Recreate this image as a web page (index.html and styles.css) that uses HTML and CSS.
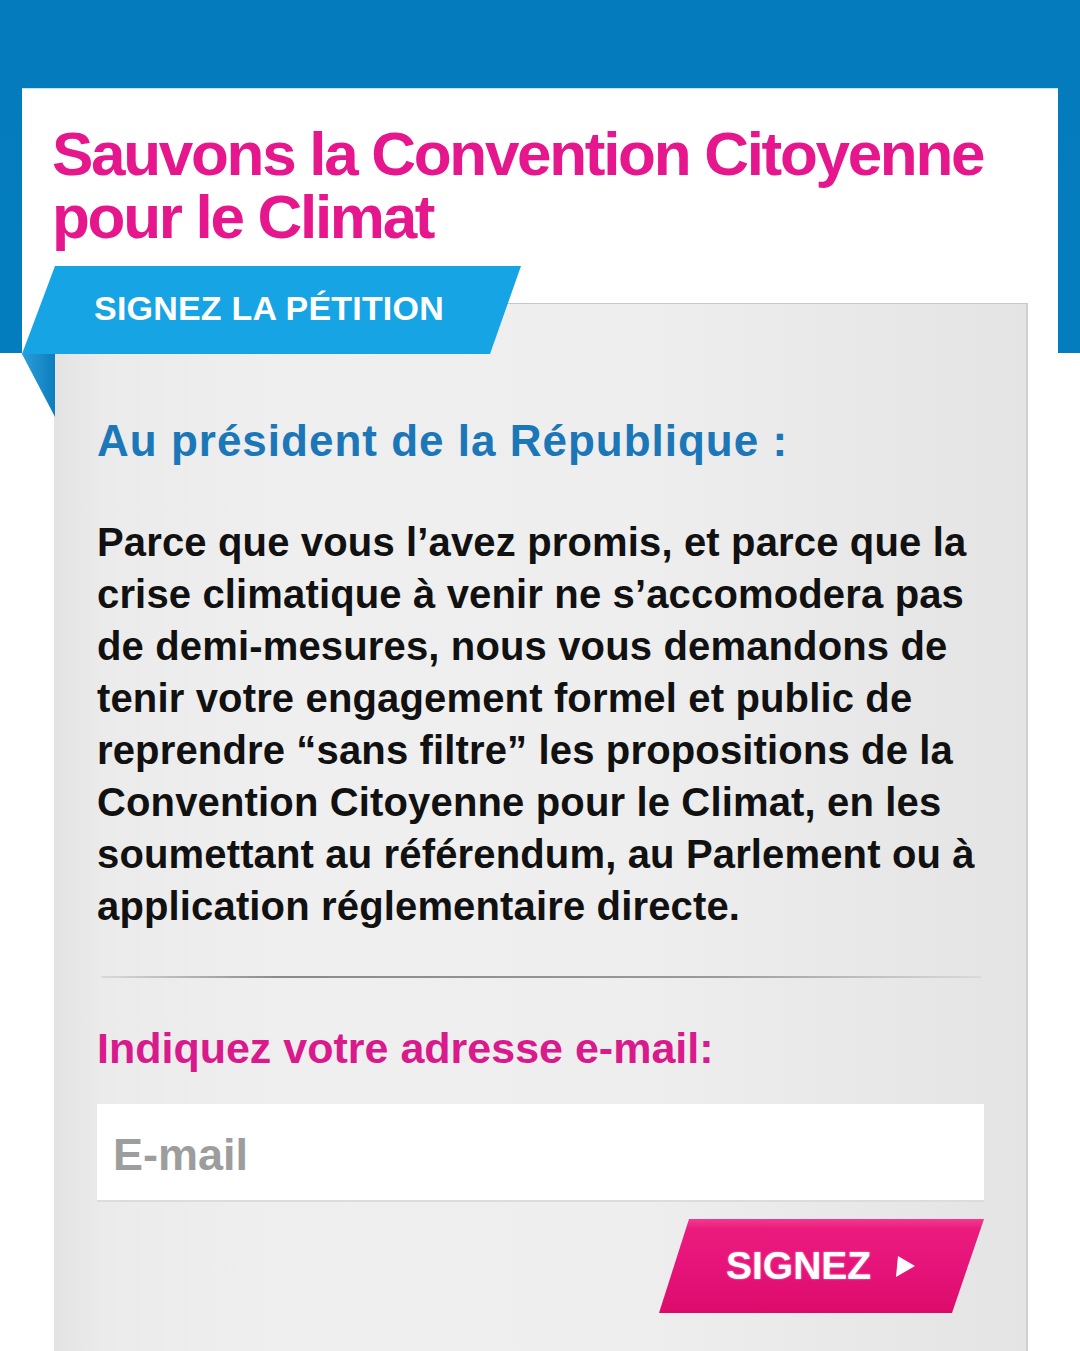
FILE: index.html
```html
<!DOCTYPE html>
<html lang="fr">
<head>
<meta charset="utf-8">
<title>Sauvons la Convention Citoyenne pour le Climat</title>
<link rel="stylesheet" href="styles.css">
</head>
<body>
<div class="page">
  <div class="card">
    <h1 class="title">Sauvons la Convention Citoyenne<br>pour le Climat</h1>
    <section class="panel">
      <div class="ribbon"><span>SIGNEZ LA PÉTITION</span></div>
      <div class="ribbon-fold"></div>
      <h2 class="addressee">Au président de la République :</h2>
      <p class="body-text">Parce que vous l’avez promis, et parce que la<br>crise climatique à venir ne s’accomodera pas<br>de demi-mesures, nous vous demandons de<br>tenir votre engagement formel et public de<br>reprendre “sans filtre” les propositions de la<br>Convention Citoyenne pour le Climat, en les<br>soumettant au référendum, au Parlement ou à<br>application réglementaire directe.</p>
      <hr class="divider">
      <label class="email-label" for="email">Indiquez votre adresse e-mail:</label>
      <input class="email-input" id="email" type="email" placeholder="E-mail">
      <div class="actions">
        <button class="sign-btn" type="button">
          <span class="sign-text">SIGNEZ</span>
          <svg class="sign-arrow" width="21" height="23" viewBox="0 0 21 23"><path d="M3 1 L20 11 L1 22 Z" fill="#fff"/></svg>
        </button>
      </div>
    </section>
  </div>
</div>
</body>
</html>
```

FILE: styles.css
```css
* { box-sizing: border-box; }

html, body {
  margin: 0;
  padding: 0;
  background: #fff;
}

body {
  font-family: "Liberation Sans", Arial, Helvetica, sans-serif;
  font-weight: bold;
}

.page {
  width: 1080px;
  height: 1351px;
  overflow: hidden;
  padding-top: 88px;
  background: linear-gradient(#037bbd 0, #047dbf 353px, #ffffff 353px);
}

.card {
  margin-left: 22px;
  width: 1036px;
  height: 1263px;
  background: #fff;
  border-top: 1px solid #bfe6f5;
  padding-top: 33px;
}

.title {
  margin: 0 0 0 30px;
  font-size: 62px;
  line-height: 63px;
  letter-spacing: -2.3px;
  color: #e6168d;
  font-weight: bold;
}

.panel {
  position: relative;
  margin: 55px 0 0 32px;
  width: 974px;
  height: 1100px;
  border-top: 1px solid #c8c8c8;
  border-right: 2px solid #d0d0d0;
  border-left: 1px solid #e2e2e2;
  background: linear-gradient(90deg, #e3e3e3 0%, #ebebeb 5%, #efefef 25%, #eeeeee 60%, #e4e4e4 100%);
  padding: 111px 43px 0 42px;
}

.ribbon {
  position: absolute;
  top: -38px;
  left: -33px;
  width: 499px;
  height: 88px;
  background: #16a4e4;
  clip-path: polygon(33px 0, 499px 0, 468px 88px, 0 88px);
  display: flex;
  align-items: center;
  padding-left: 72px;
  padding-bottom: 4px;
}

.ribbon span {
  color: #fff;
  font-size: 34px;
  letter-spacing: 0.2px;
}

.ribbon-fold {
  position: absolute;
  top: 50px;
  left: -33px;
  width: 33px;
  height: 63px;
  background: linear-gradient(90deg, #2a9fd8, #0c7dbd);
  clip-path: polygon(0 0, 33px 0, 33px 63px);
}

.addressee {
  margin: 0;
  font-size: 44px;
  line-height: 52px;
  letter-spacing: 1px;
  color: #1b77b7;
  font-weight: bold;
}

.body-text {
  margin: 49px 0 0;
  font-size: 40px;
  line-height: 52px;
  letter-spacing: 0.15px;
  color: #111;
  white-space: nowrap;
}

.divider {
  margin: 44px 0 0 4px;
  width: 880px;
  height: 2px;
  border: 0;
  background: linear-gradient(90deg, rgba(150,150,150,0.2), #8a8a8a 20%, #9a9a9a 70%, rgba(170,170,170,0.2));
}

.email-label {
  display: block;
  margin-top: 44px;
  font-size: 43px;
  line-height: 52px;
  color: #d91a8c;
}

.email-input {
  display: block;
  margin-top: 30px;
  width: 887px;
  height: 98px;
  border: 0;
  border-bottom: 2px solid #dcdcdc;
  background: #fff;
  padding: 6px 0 0 16px;
  font-family: "Liberation Sans", Arial, Helvetica, sans-serif;
  font-weight: bold;
  font-size: 45px;
  color: #333;
  outline: none;
}

.email-input::placeholder {
  color: #9d9d9d;
}

.actions {
  display: flex;
  justify-content: flex-end;
  margin-top: 17px;
  width: 887px;
}

.sign-btn {
  width: 325px;
  height: 94px;
  border: 0;
  padding: 0 0 0 67px;
  display: flex;
  align-items: center;
  gap: 24px;
  background: linear-gradient(#f13a90 0, #eb1b7d 10%, #e6147a 50%, #dc0b6b 100%);
  clip-path: polygon(30px 0, 325px 0, 293px 94px, 0 94px);
  cursor: pointer;
}

.sign-text {
  font-family: "Liberation Sans", Arial, Helvetica, sans-serif;
  font-weight: bold;
  font-size: 39px;
  color: #fff;
  text-shadow: 0 0 2px rgba(255, 190, 220, 0.8);
}

.sign-arrow {
  display: block;
}
```
